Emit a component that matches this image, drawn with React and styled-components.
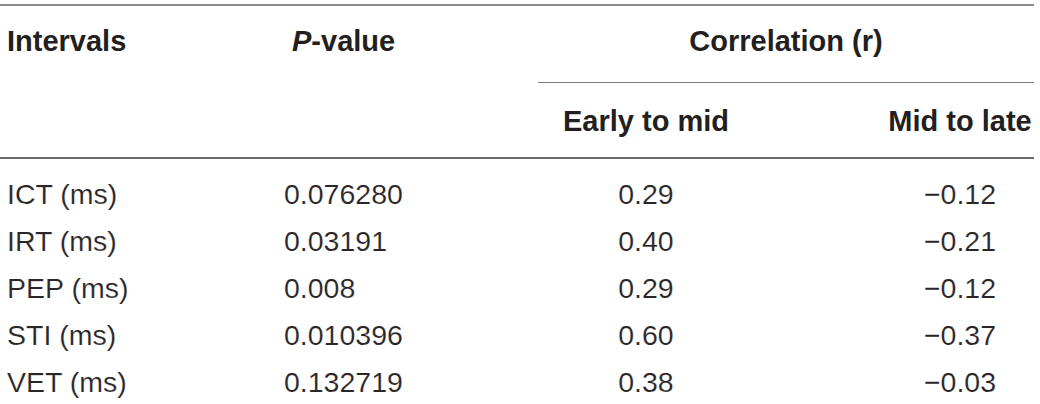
import React from "react";
import styled, { createGlobalStyle } from "styled-components";

const GlobalStyle = createGlobalStyle`
    html, body {
        margin: 0;
        padding: 0;
        background: #ffffff;
    }
    body {
        font-family: "Liberation Sans", Arial, Helvetica, sans-serif;
        color: #231f20;
    }
`

const Wrapper = styled.div`
    width: 1034px;
    padding-top: 4px;
`

const Table = styled.div`
    border-top: 2px solid #8c8c8c;
`

const Columns = `270px 268px 216px 280px`

const Head = styled.div`
    display: grid;
    grid-template-columns: ${Columns};
    border-bottom: 2px solid #6b6b6b;
`

const HeadCell = styled.div`
    font-size: 29px;
    font-weight: 700;
    line-height: 47px;
    padding: ${props => props.$pad || "12px 0 0 0"};
    text-align: ${props => props.$align || "left"};
    grid-column: ${props => props.$col || "auto"};
    grid-row: ${props => props.$row || "auto"};
    white-space: nowrap;

    em {
        font-style: italic;
    }
`

const GroupCell = styled(HeadCell)`
    border-bottom: 1.5px solid #7a7a7a;
    padding: 12px 0 17px 0;
    text-align: center;
`

const Body = styled.div`
    padding-top: 12px;
`

const Row = styled.div`
    display: grid;
    grid-template-columns: ${Columns};
    font-size: 28.5px;
    font-weight: 400;
    line-height: 47px;
    color: #2a2627;
`

const Cell = styled.div`
    text-align: ${props => props.$align || "left"};
    padding: ${props => props.$pad || "0"};
    white-space: nowrap;
    -webkit-text-stroke: 0.15px #ffffff;
`

const rows = [
    ["ICT (ms)", "0.076280", "0.29", "\u22120.12"],
    ["IRT (ms)", "0.03191", "0.40", "\u22120.21"],
    ["PEP (ms)", "0.008", "0.29", "\u22120.12"],
    ["STI (ms)", "0.010396", "0.60", "\u22120.37"],
    ["VET (ms)", "0.132719", "0.38", "\u22120.03"],
]

export default function App() {
    return (
        <>
            <GlobalStyle />
            <Wrapper>
                <Table>
                    <Head>
                        <HeadCell $col="1" $row="1 / span 2" $pad="12px 0 0 7px">Intervals</HeadCell>
                        <HeadCell $col="2" $row="1 / span 2" $pad="12px 0 0 22px"><em>P</em>-value</HeadCell>
                        <GroupCell $col="3 / span 2" $row="1">Correlation (r)</GroupCell>
                        <HeadCell $col="3" $row="2" $align="center" $pad="15px 0 12px 0">Early to mid</HeadCell>
                        <HeadCell $col="4" $row="2" $align="center" $pad="15px 0 12px 132px">Mid to late</HeadCell>
                    </Head>
                    <Body>
                        {rows.map(r => (
                            <Row key={r[0]}>
                                <Cell $pad="0 0 0 7px">{r[0]}</Cell>
                                <Cell $pad="0 0 0 14px">{r[1]}</Cell>
                                <Cell $align="center">{r[2]}</Cell>
                                <Cell $align="center" $pad="0 0 0 132px">{r[3]}</Cell>
                            </Row>
                        ))}
                    </Body>
                </Table>
            </Wrapper>
        </>
    );
}
